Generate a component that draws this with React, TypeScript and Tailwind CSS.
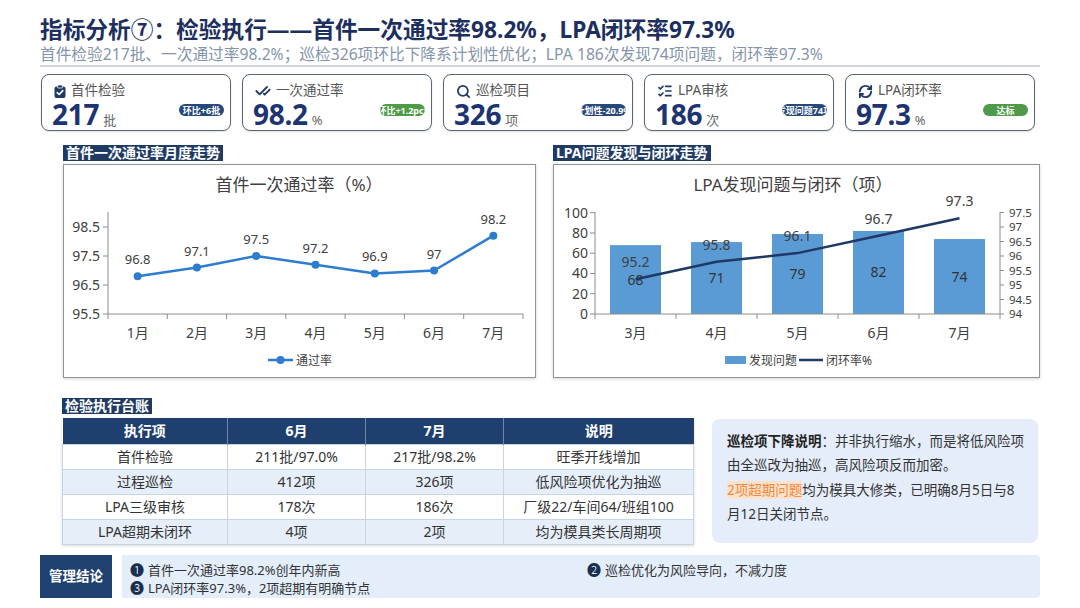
import React from "react";
import { CheckCheck, Search, ListChecks, RefreshCw } from "lucide-react";

function ClipIcon() {
  return (
    <svg width="12" height="13" viewBox="0 0 12 13">
      <rect x="0.5" y="1.5" width="11" height="11.5" rx="2" fill="#1f3b64" />
      <rect x="3.5" y="0" width="5" height="3" rx="1" fill="#1f3b64" stroke="#fff" strokeWidth="0.8" />
      <path d="M3.2 7.6 L5.2 9.5 L8.8 5.6" fill="none" stroke="#fff" strokeWidth="1.6" strokeLinecap="round" strokeLinejoin="round" />
    </svg>
  );
}

type Card = {
  icon: React.ReactNode;
  label: string;
  value: string;
  unit: string;
  badge: string;
  green?: boolean;
};

const cards: Card[] = [
  { icon: <ClipIcon />, label: "首件检验", value: "217", unit: "批", badge: "环比+6批" },
  { icon: <CheckCheck size={16} strokeWidth={2.8} color="#1f3b64" />, label: "一次通过率", value: "98.2", unit: "%", badge: "环比+1.2pct", green: true },
  { icon: <Search size={15} strokeWidth={2.8} color="#1f3b64" />, label: "巡检项目", value: "326", unit: "项", badge: "计划性-20.9%" },
  { icon: <ListChecks size={16} strokeWidth={2.5} color="#1f3b64" />, label: "LPA审核", value: "186", unit: "次", badge: "发现问题74项" },
  { icon: <RefreshCw size={15} strokeWidth={3} color="#1f3b64" />, label: "LPA闭环率", value: "97.3", unit: "%", badge: "达标", green: true },
];

function KpiCard({ c }: { c: Card }) {
  return (
    <div className="w-[190px] h-[57px] rounded-[8px] border-[1.5px] border-[#5b6679] pl-[10px] pr-[6px] pt-[7px] bg-white shadow-[0_1px_2px_rgba(0,0,0,0.12)]">
      <div className="flex items-center gap-[5px] h-[18px] pl-[2px] text-[13.5px] leading-none text-[#555]">
        <span className="flex items-center">{c.icon}</span>
        <span>{c.label}</span>
      </div>
      <div className="flex items-start justify-between h-[29px]">
        <div className="flex items-baseline gap-[4px]">
          <span className="text-[28px] font-bold leading-[29px] text-[#1c3472] tracking-[-0.3px]">{c.value}</span>
          <span className="text-[13px] leading-[16px] text-[#666]">{c.unit}</span>
        </div>
        <div
          className={
            "mt-[4px] w-[45px] h-[12px] rounded-full flex items-center justify-center overflow-hidden " +
            (c.green ? "bg-[#4e9a48]" : "bg-[#27497a]")
          }
        >
          <span className="text-[9px] font-bold text-white whitespace-nowrap leading-none">{c.badge}</span>
        </div>
      </div>
    </div>
  );
}

function SectionLabel({ children }: { children: React.ReactNode }) {
  return (
    <div className="w-fit h-[16px] px-[3px] bg-[#1f3b64] text-white font-bold text-[14px] leading-[16px] whitespace-nowrap">
      {children}
    </div>
  );
}

function LineChart() {
  const vals = [96.8, 97.1, 97.5, 97.2, 96.9, 97, 98.2];
  const labels = ["96.8", "97.1", "97.5", "97.2", "96.9", "97", "98.2"];
  const x0 = 45;
  const x1 = 460;
  const cw = (x1 - x0) / 7;
  const cx = (i: number) => x0 + cw * (i + 0.5);
  const cy = (v: number) => 150 - (v - 95.5) * 29;
  const pts = vals.map((v, i) => `${cx(i)},${cy(v)}`).join(" ");
  const yl = [95.5, 96.5, 97.5, 98.5];
  return (
    <svg width="471" height="212" viewBox="1 1 471 212" className="block">
      <text x="236" y="27" textAnchor="middle" fontSize="17" fill="#404040">首件一次通过率（%）</text>
      <line x1={x0} y1={48} x2={x0} y2={150} stroke="#8c8c8c" strokeWidth="1" />
      {yl.map((v) => (
        <g key={v}>
          <line x1={x0 - 5} y1={cy(v)} x2={x0} y2={cy(v)} stroke="#8c8c8c" />
          <text x={x0 - 8} y={cy(v) + 5} textAnchor="end" fontSize="14" fill="#404040">{v.toFixed(1)}</text>
        </g>
      ))}
      <line x1={x0} y1={150} x2={x1} y2={150} stroke="#8c8c8c" />
      {Array.from({ length: 8 }).map((_, k) => (
        <line key={k} x1={x0 + cw * k} y1={150} x2={x0 + cw * k} y2={155} stroke="#8c8c8c" />
      ))}
      {vals.map((_, i) => (
        <text key={i} x={cx(i)} y={174} textAnchor="middle" fontSize="14" fill="#404040">{i + 1}月</text>
      ))}
      <polyline points={pts} fill="none" stroke="#2e7bd2" strokeWidth="2.5" strokeLinejoin="round" />
      {vals.map((v, i) => (
        <g key={i}>
          <circle cx={cx(i)} cy={cy(v)} r="4" fill="#2e7bd2" />
          <text x={cx(i)} y={cy(v) - 12} textAnchor="middle" fontSize="13" fill="#404040">{labels[i]}</text>
        </g>
      ))}
      <line x1={205} y1={196} x2={230} y2={196} stroke="#2e7bd2" strokeWidth="2.5" />
      <circle cx={217.5} cy={196} r="4" fill="#2e7bd2" />
      <text x={233} y={200.5} fontSize="12" fill="#404040">通过率</text>
    </svg>
  );
}

function ComboChart() {
  const bars = [68, 71, 79, 82, 74];
  const rates = [95.2, 95.8, 96.1, 96.7, 97.3];
  const months = ["3月", "4月", "5月", "6月", "7月"];
  const x0 = 42;
  const x1 = 447;
  const cw = (x1 - x0) / 5;
  const cx = (i: number) => x0 + cw * (i + 0.5);
  const by = (v: number) => 150 - v * 1.013;
  const ry = (v: number) => 150 - (v - 94) * 29;
  const pts = rates.map((v, i) => `${cx(i)},${ry(v)}`).join(" ");
  const left = [0, 20, 40, 60, 80, 100];
  const right = [94, 94.5, 95, 95.5, 96, 96.5, 97, 97.5];
  return (
    <svg width="485" height="212" viewBox="1 1 485 212" className="block">
      <text x="240" y="27" textAnchor="middle" fontSize="17" fill="#404040">LPA发现问题与闭环（项）</text>
      {bars.map((v, i) => (
        <rect key={i} x={cx(i) - 25.5} y={by(v)} width="51" height={150 - by(v)} fill="#5b9bd5" />
      ))}
      <line x1={x0} y1={48} x2={x0} y2={150} stroke="#8c8c8c" />
      <line x1={x1} y1={48} x2={x1} y2={150} stroke="#8c8c8c" />
      {left.map((v) => (
        <g key={v}>
          <line x1={x0 - 5} y1={by(v)} x2={x0} y2={by(v)} stroke="#8c8c8c" />
          <text x={x0 - 7} y={by(v) + 5} textAnchor="end" fontSize="14" fill="#404040">{v}</text>
        </g>
      ))}
      {right.map((v) => (
        <g key={v}>
          <line x1={x1} y1={ry(v)} x2={x1 + 4} y2={ry(v)} stroke="#8c8c8c" />
          <text x={x1 + 9} y={ry(v) + 4} fontSize="11.5" fill="#404040">{v}</text>
        </g>
      ))}
      <line x1={x0} y1={150} x2={x1} y2={150} stroke="#8c8c8c" />
      {Array.from({ length: 6 }).map((_, k) => (
        <line key={k} x1={x0 + cw * k} y1={150} x2={x0 + cw * k} y2={155} stroke="#8c8c8c" />
      ))}
      {months.map((m, i) => (
        <text key={m} x={cx(i)} y={174} textAnchor="middle" fontSize="14" fill="#404040">{m}</text>
      ))}
      {bars.map((v, i) => (
        <text key={i} x={cx(i)} y={(by(v) + 150) / 2 + 5} textAnchor="middle" fontSize="14" fill="#333">{v}</text>
      ))}
      <polyline points={pts} fill="none" stroke="#1f3864" strokeWidth="2.5" strokeLinejoin="round" />
      {rates.map((v, i) => (
        <text key={i} x={cx(i)} y={ry(v) - 12} textAnchor="middle" fontSize="14" fill="#404040">{v}</text>
      ))}
      <rect x={172} y={192} width={21} height={8} fill="#5b9bd5" />
      <text x={196} y={200.5} fontSize="12" fill="#404040">发现问题</text>
      <line x1={246} y1={196} x2={270} y2={196} stroke="#1f3864" strokeWidth="2.5" />
      <text x={273} y={200.5} fontSize="12" fill="#404040">闭环率%</text>
    </svg>
  );
}

const rows = [
  ["首件检验", "211批/97.0%", "217批/98.2%", "旺季开线增加"],
  ["过程巡检", "412项", "326项", "低风险项优化为抽巡"],
  ["LPA三级审核", "178次", "186次", "厂级22/车间64/班组100"],
  ["LPA超期未闭环", "4项", "2项", "均为模具类长周期项"],
];

export default function App() {
  return (
    <div className="w-[1080px] h-[608px] bg-white overflow-hidden font-['Noto_Sans','Noto_Sans_CJK_SC',sans-serif] text-[#333]">
      <div className="px-[40px] pt-[16px]">
        <h1 className="text-[22.7px] font-bold leading-[28px] text-[#1c2f5e] whitespace-nowrap">
          指标分析⑦：检验执行——首件一次通过率98.2%，LPA闭环率97.3%
        </h1>
        <div className="text-[15.7px] leading-[20px] text-[#8494ab] whitespace-nowrap border-b-2 border-[#cfd3d8] pb-[1px]">
          首件检验217批、一次通过率98.2%；巡检326项环比下降系计划性优化；LPA 186次发现74项问题，闭环率97.3%
        </div>

        <div className="mt-[7px] flex gap-[11px] pl-[1px]">
          {cards.map((c) => (
            <KpiCard key={c.label} c={c} />
          ))}
        </div>

        <div className="mt-[14px] ml-[23px] flex gap-[17px]">
          <div className="w-[473px]">
            <SectionLabel>首件一次通过率月度走势</SectionLabel>
            <div className="mt-[3px] h-[214px] border border-[#8f959d] shadow-[0_1px_3px_rgba(0,0,0,0.18)] bg-white">
              <LineChart />
            </div>
          </div>
          <div className="w-[487px]">
            <SectionLabel>LPA问题发现与闭环走势</SectionLabel>
            <div className="mt-[3px] h-[214px] border border-[#8f959d] shadow-[0_1px_3px_rgba(0,0,0,0.18)] bg-white">
              <ComboChart />
            </div>
          </div>
        </div>

        <div className="mt-[20px] ml-[22px] flex gap-[19px]">
          <div className="w-[631px]">
            <SectionLabel>检验执行台账</SectionLabel>
            <table className="mt-[4px] w-[631px] table-fixed border-collapse text-[14px] text-[#333] shadow-[0_1px_3px_rgba(0,0,0,0.15)]">
              <colgroup>
                <col className="w-[165px]" />
                <col className="w-[138px]" />
                <col className="w-[138px]" />
                <col className="w-[190px]" />
              </colgroup>
              <thead>
                <tr className="h-[26px] bg-[#1f3f6e] text-white">
                  {["执行项", "6月", "7月", "说明"].map((h) => (
                    <th key={h} className="font-bold text-[14px] leading-none border-x border-[#6f86a6] first:border-l-0 last:border-r-0">
                      {h}
                    </th>
                  ))}
                </tr>
              </thead>
              <tbody>
                {rows.map((r, i) => (
                  <tr key={r[0]} className={"h-[25px] " + (i % 2 === 1 ? "bg-[#e5eef9]" : "bg-white")}>
                    {r.map((c, j) => (
                      <td key={j} className="text-center leading-none border border-[#c9d4e2] whitespace-nowrap">
                        {c}
                      </td>
                    ))}
                  </tr>
                ))}
              </tbody>
            </table>
          </div>
          <div className="pt-[21px]">
            <div className="w-[326px] h-[124px] rounded-[8px] bg-[#e4edf9] pl-[15px] pt-[10px] text-[13.5px] leading-[24px] text-[#333] whitespace-nowrap">
              <div>
                <span className="font-bold text-[#222]">巡检项下降说明</span>：并非执行缩水，而是将低风险项
                <br />
                由全巡改为抽巡，高风险项反而加密。
              </div>
              <div className="mt-[1px]">
                <span className="text-[#ef8a3c] bg-[#fbe2cd]">2项超期问题</span>均为模具大修类，已明确8月5日与8
                <br />
                月12日关闭节点。
              </div>
            </div>
          </div>
        </div>

        <div className="mt-[10px] flex gap-[10px] h-[43px]">
          <div className="w-[72px] bg-[#1f4170] flex items-center justify-center text-white font-bold text-[13.5px]">
            管理结论
          </div>
          <div className="flex-1 bg-[#e3eefa] rounded-r-[4px] pl-[8px] pt-[6px] grid grid-cols-[457px_1fr] content-start text-[13px] leading-[18px] text-[#333]">
            <div className="whitespace-nowrap">
              <span className="text-[#1a2e50] text-[14px] mr-[4px]">❶</span>首件一次通过率98.2%创年内新高
            </div>
            <div className="whitespace-nowrap">
              <span className="text-[#1a2e50] text-[14px] mr-[4px]">❷</span>巡检优化为风险导向，不减力度
            </div>
            <div className="whitespace-nowrap">
              <span className="text-[#1a2e50] text-[14px] mr-[4px]">❸</span>LPA闭环率97.3%，2项超期有明确节点
            </div>
          </div>
        </div>
      </div>
    </div>
  );
}
